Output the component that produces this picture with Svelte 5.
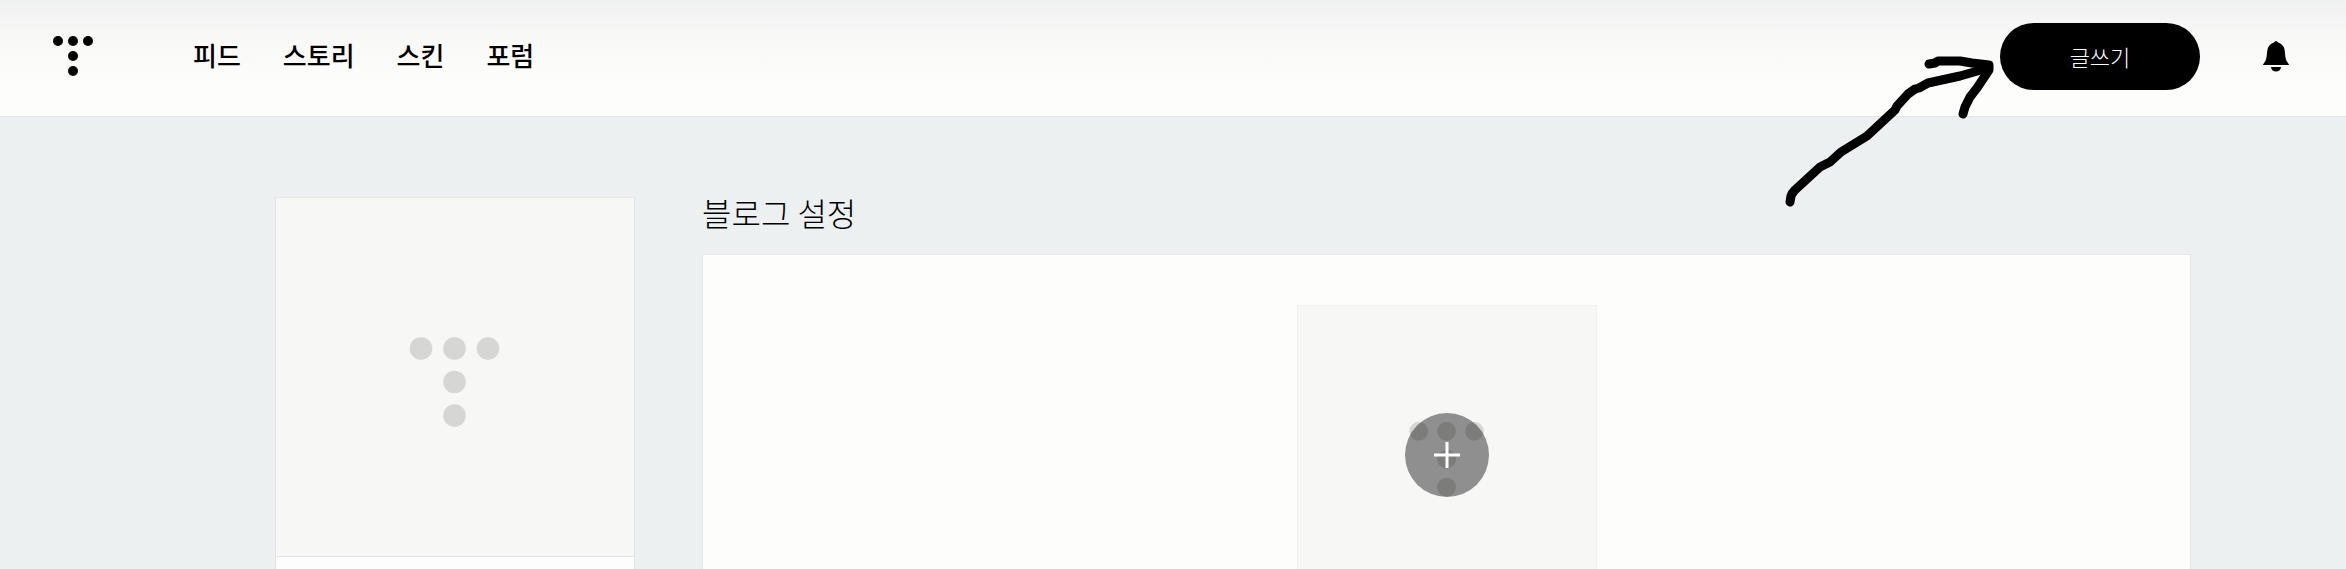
<script lang="ts">
  const menu = [
    { label: '피드', href: '#feed' },
    { label: '스토리', href: '#story' },
    { label: '스킨', href: '#skin' },
    { label: '포럼', href: '#forum' },
  ];

  // dots of the T mark, in grid steps from its centre
  const dots = [[-1, -1], [0, -1], [1, -1], [0, 0], [0, 1]];
</script>

{#snippet placeholder()}
  <svg class="placeholder" viewBox="0 0 358 358" aria-hidden="true">
    {#each dots as [x, y]}
      <circle cx={178.5 + x * 33.5} cy={184 + y * 33.5} r="11.3" />
    {/each}
  </svg>
{/snippet}

<div class="page">
  <header class="header">
    <a class="logo" href="#home" aria-label="홈">
      <svg width="42" height="42" viewBox="0 0 42 42">
        {#each dots as [x, y]}
          <circle cx={21 + x * 15} cy={21 + y * 15} r="5" />
        {/each}
      </svg>
    </a>
    <nav class="menu">
      {#each menu as item}
        <a href={item.href}>{item.label}</a>
      {/each}
    </nav>
    <div class="actions">
      <button class="write" type="button">글쓰기</button>
      <button class="bell" type="button" aria-label="알림">
        <svg width="28" height="32" viewBox="0 0 28 32">
          <path d="M14 1c-.8 0-1.300.8-2.200 1.400C8 3.800 5.600 6.500 5.200 11c-.5 6-.9 9.500-3.200 12L.8 25h26.400L26 23c-2.300-2.500-2.700-6-3.200-12-.4-4.500-2.800-7.200-6.600-8.600C15.300 1.800 14.800 1 14 1z" />
          <path d="M9 27h10c-.3 3-2.300 4.500-5 4.500S9.300 30 9 27z" />
        </svg>
      </button>
      <svg class="arrow" width="230" height="180" viewBox="0 0 230 180" aria-hidden="true">
        <path d="M10 171L11 165Q12 162 15 159L40 136L50 131L61 121L87 105L115 79L117 75L128 63L135 58L139 57L148 52L180 45L208 37" />
        <path d="M149 33L155 32L158 30H180L192 32L209 34V39L197 57L190 66L185 76L183 83" />
      </svg>
    </div>
  </header>

  <main class="content">
    <aside class="profile">
      {@render placeholder()}
      <div class="profile-info"></div>
    </aside>
    <section class="settings">
      <h1>블로그 설정</h1>
      <div class="panel">
        <div class="image-box">
          {@render placeholder()}
          <button class="add" type="button" aria-label="이미지 추가">
            <svg width="28" height="28" viewBox="0 0 28 28">
              <path d="M14 1v26M1 14h26" />
            </svg>
          </button>
        </div>
      </div>
    </section>
  </main>
</div>

<style>
  :global(body) {
    margin: 0;
    background: #ecf0f1;
  }

  .page {
    height: 100vh;
    overflow: hidden;
    font-family: "Noto Sans CJK KR", sans-serif;
    color: #000;
  }

  .header {
    display: flex;
    align-items: center;
    height: 112px;
    padding: 0 56px 4px 52px;
    border-bottom: 1px solid #e3e5e8;
    background: linear-gradient(#f0f1f1, #f8f8f7 36px, #fdfdfc 84px);
  }

  .logo,
  .logo svg,
  .bell svg {
    display: block;
  }

  .menu {
    display: flex;
    gap: 42px;
    margin-left: 99px;
    padding-bottom: 2px;
  }

  .menu a {
    color: #000;
    font-size: 26px;
    font-weight: 500;
    line-height: 40px;
    text-decoration: none;
  }

  .actions {
    position: relative;
    display: flex;
    align-items: center;
    gap: 62px;
    margin-left: auto;
  }

  .write {
    width: 200px;
    height: 67px;
    padding: 0;
    border: 0;
    border-radius: 34px;
    background: #000;
    color: #fff;
    font-family: inherit;
    font-size: 22px;
    font-weight: 300;
    line-height: 32px;
  }

  .bell {
    padding: 0;
    border: 0;
    background: none;
  }

  /* hand-drawn pointer over the header and the page below it */
  .arrow {
    position: absolute;
    top: 8px;
    right: 280px;
    overflow: visible;
    pointer-events: none;
  }

  .arrow path {
    fill: none;
    stroke: #000;
    stroke-width: 9;
    stroke-linecap: round;
    stroke-linejoin: round;
  }

  .content {
    display: grid;
    grid-template-columns: 360px 1fr;
    gap: 67px;
    padding: 80px 155px 0 275px;
  }

  .placeholder {
    display: block;
    width: 100%;
    background: #f7f7f6;
    fill: #d6d6d5;
  }

  .profile {
    border: 1px solid #e2e4e6;
    background: #fdfdfd;
  }

  .profile-info {
    height: 120px;
    border-top: 1px solid #e2e4e4;
  }

  h1 {
    margin: 0 0 27px;
    font-size: 32px;
    font-weight: 300;
    line-height: 30px;
  }

  .panel {
    display: flex;
    justify-content: center;
    padding: 50px 0;
    border: 1px solid #e4e6e8;
    background: #fdfdfc;
  }

  .image-box {
    position: relative;
    box-sizing: border-box;
    width: 300px;
    border: 1px solid #f0f0ef;
  }

  .add {
    position: absolute;
    inset: 0;
    display: grid;
    place-items: center;
    width: 84px;
    height: 84px;
    margin: auto;
    padding: 0;
    border: 0;
    border-radius: 50%;
    background: rgba(0, 0, 0, 0.42);
  }

  .add path {
    stroke: #fff;
    stroke-width: 3;
  }
</style>
